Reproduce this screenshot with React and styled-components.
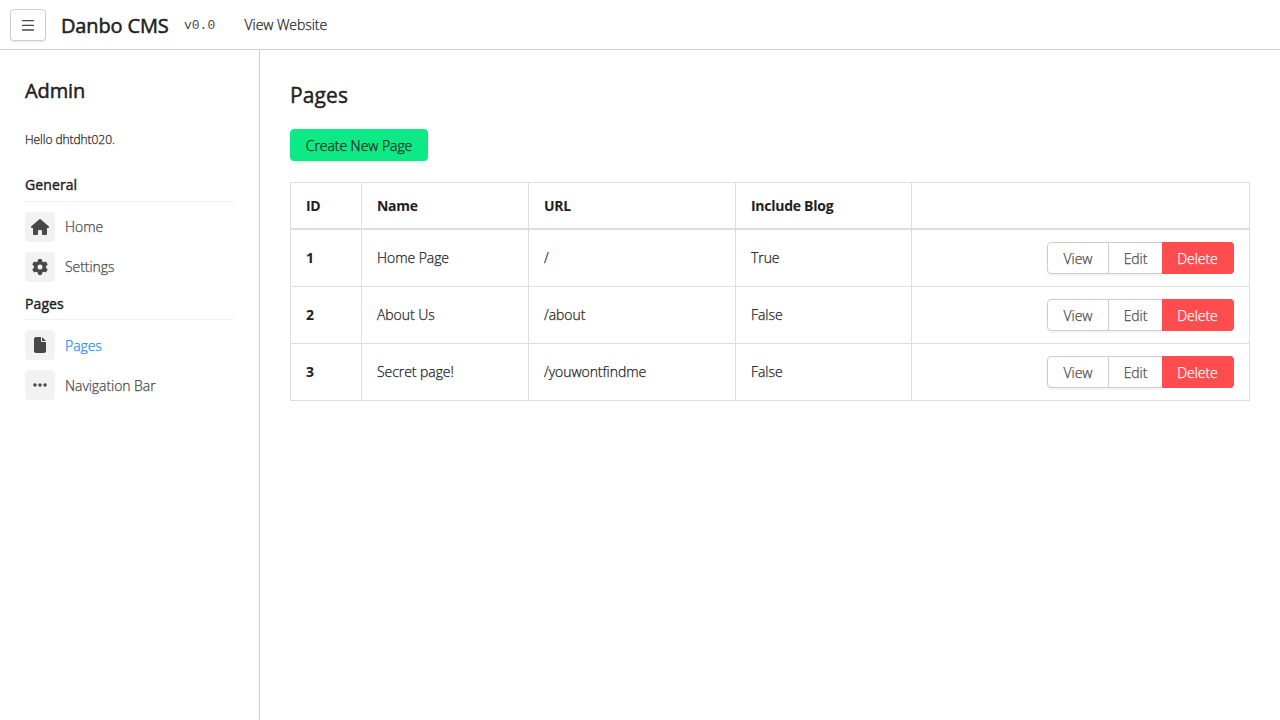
import React from "react";
import styled, { createGlobalStyle } from "styled-components";
import { FaHouse, FaGear, FaFile, FaEllipsis } from "react-icons/fa6";

const Global = createGlobalStyle`
  * { box-sizing: border-box; }
  body {
    margin: 0;
    background: #fff;
    color: #212121;
    font: 300 14px/20px "Segoe UI", "Open Sans", "Noto Sans", sans-serif;
    letter-spacing: -0.06px;
    -webkit-text-stroke: 0.25px currentColor;
  }
  h1, h2, h3, p { margin: 0; }
  a { color: inherit; text-decoration: none; }
`;

const Page = styled.div`
  height: 100vh;
  display: flex;
  flex-direction: column;
  overflow: hidden;
`;

const TopBar = styled.header`
  height: 50px;
  flex: none;
  display: flex;
  align-items: center;
  padding: 0 10px;
  border-bottom: 1px solid #ccc;
`;

const MenuButton = styled.button`
  width: 36px;
  height: 32px;
  margin: 1px 15px 0 0;
  padding: 0;
  display: flex;
  align-items: center;
  justify-content: center;
  background: #fff;
  border: 1px solid #ccc;
  border-radius: 4px;
  box-shadow: 0 2px 0 rgba(0, 0, 0, 0.045);
  color: #484848;
`;

const Brand = styled.h1`
  width: 123px;
  padding-top: 2px;
  font-size: 20px;
  line-height: 28px;
  font-weight: 400;
  letter-spacing: -0.15px;
  -webkit-text-stroke-width: 0.5px;
  white-space: nowrap;
`;

const Version = styled.span`
  width: 60.5px;
  padding-top: 3px;
  font: 13px/20px "Liberation Mono", monospace;
  letter-spacing: 0;
  -webkit-text-stroke-width: 0;
  color: #484848;
`;

const TopLink = styled.a`
  padding-top: 1px;
`;

const Body = styled.div`
  flex: 1;
  display: flex;
  min-height: 0;
`;

const Sidebar = styled.aside`
  width: 260px;
  flex: none;
  padding: 27px 25px 0;
  border-right: 1px solid #ccc;
`;

const SideTitle = styled.h2`
  font-size: 20px;
  line-height: 28px;
  font-weight: 400;
  letter-spacing: -0.1px;
  -webkit-text-stroke-width: 0.5px;
`;

const Greeting = styled.p`
  margin-top: 25px;
  font-size: 12px;
  line-height: 20px;
`;

const SectionTitle = styled.h3`
  height: ${(p) => (p.$first ? 27 : 28)}px;
  margin: ${(p) => (p.$first ? "25px" : "0")} 0 10px;
  padding-top: ${(p) => (p.$first ? 0 : 2)}px;
  font-size: 14px;
  line-height: 20px;
  font-weight: 400;
  letter-spacing: 0.1px;
  -webkit-text-stroke-width: 0.4px;
  border-bottom: 1px solid #f0f0f0;
`;

const NavItem = styled.a`
  display: flex;
  align-items: center;
  gap: 10px;
  height: 30px;
  margin-bottom: 10px;
  color: ${(p) => (p.$active ? "#1a8cff" : "#484848")};
`;

const NavLabel = styled.span`
  padding-top: ${(p) => (p.$low ? 2 : 0)}px;
`;

const NavIcon = styled.span`
  width: 30px;
  height: 30px;
  display: flex;
  align-items: center;
  justify-content: center;
  border-radius: 4px;
  background: #f2f2f2;
  color: #484848;

  svg { width: ${(p) => p.$size}px; height: 16px; stroke: none; }
`;

const Main = styled.main`
  flex: 1;
  padding: 30px;
`;

const Heading = styled.h2`
  font-size: 21px;
  line-height: 31px;
  font-weight: 400;
  letter-spacing: 0.1px;
  -webkit-text-stroke-width: 0.4px;
  margin-bottom: 18px;
`;

const Button = styled.button`
  height: 32px;
  padding: 2px 0 0;
  width: ${(p) => p.$w}px;
  font: inherit;
  letter-spacing: inherit;
  border: 1px solid #ccc;
  border-radius: 4px;
  color: #484848;
  background: #fff;
  box-shadow: 0 2px 0 rgba(0, 0, 0, 0.045);
  ${(p) => p.$kind === "create" && "background: #0de984; border-color: #0de984; color: #212121;"}
  ${(p) => p.$kind === "delete" && "background: #ff4d4f; border-color: #ff4d4f; color: #fff; box-shadow: none;"}
`;

const ButtonGroup = styled.div`
  display: flex;
  justify-content: flex-end;

  ${Button} { border-radius: 0; }
  ${Button} + ${Button} { border-left-width: 0; }
  ${Button}:first-child { border-radius: 4px 0 0 4px; }
  ${Button}:last-child { border-radius: 0 4px 4px 0; }
  ${Button}:nth-child(2) { border-right-width: 0; }
`;

const Table = styled.table`
  width: 960px;
  margin-top: 21px;
  table-layout: fixed;
  border-collapse: separate;
  border-spacing: 0;
  border: solid #dbdfe1;
  border-width: 1px 0 0 1px;
`;

const Col = styled.col`
  width: ${(p) => p.$w}px;
`;

const Cell = styled.td`
  height: 57px;
  padding: 0 15px;
  text-align: left;
  vertical-align: middle;
  font-weight: ${(p) => (p.$bold ? 700 : "inherit")};
  ${(p) => p.$bold && "-webkit-text-stroke-width: 0;"}
  border: solid #dbdfe1;
  border-width: 0 1px 1px 0;
`;

const HeadCell = styled(Cell)`
  height: 47px;
  font-weight: 700;
  letter-spacing: -0.27px;
  -webkit-text-stroke-width: 0;
  border-bottom-width: 2px;
`;

const general = [
  { label: "Home", icon: FaHouse, size: 18 },
  { label: "Settings", icon: FaGear, size: 16 },
];
const pagesNav = [
  { label: "Pages", icon: FaFile, size: 12, active: true },
  { label: "Navigation Bar", icon: FaEllipsis, size: 14 },
];
const rows = [
  { id: 1, name: "Home Page", url: "/", blog: "True" },
  { id: 2, name: "About Us", url: "/about", blog: "False" },
  { id: 3, name: "Secret page!", url: "/youwontfindme", blog: "False" },
];

const Nav = ({ items, low }) =>
  items.map(({ label, icon: Icon, size, active }) => (
    <NavItem key={label} $active={active}>
      <NavIcon $size={size}><Icon /></NavIcon>
      <NavLabel $low={low}>{label}</NavLabel>
    </NavItem>
  ));

const MenuIcon = () => (
  <svg width="12" height="12" viewBox="0 0 12 12" stroke="currentColor" strokeWidth="1.4" strokeLinecap="round">
    <path d="M.6 1.6h10.8M.6 6.4h10.8M.6 11h10.8" />
  </svg>
);

export default function App() {
  return (
    <Page>
      <Global />
      <TopBar>
        <MenuButton aria-label="Menu"><MenuIcon /></MenuButton>
        <Brand>Danbo CMS</Brand>
        <Version>v0.0</Version>
        <TopLink>View Website</TopLink>
      </TopBar>
      <Body>
        <Sidebar>
          <SideTitle>Admin</SideTitle>
          <Greeting>Hello dhtdht020.</Greeting>
          <SectionTitle $first>General</SectionTitle>
          <Nav items={general} />
          <SectionTitle>Pages</SectionTitle>
          <Nav items={pagesNav} low />
        </Sidebar>
        <Main>
          <Heading>Pages</Heading>
          <Button $kind="create" $w={138}>Create New Page</Button>
          <Table>
            <colgroup>
              {[71, 167, 207, 176, 338].map((w) => <Col key={w} $w={w} />)}
            </colgroup>
            <thead>
              <tr>
                {["ID", "Name", "URL", "Include Blog", ""].map((h) => (
                  <HeadCell as="th" key={h}>{h}</HeadCell>
                ))}
              </tr>
            </thead>
            <tbody>
              {rows.map((r) => (
                <tr key={r.id}>
                  <Cell $bold>{r.id}</Cell>
                  <Cell>{r.name}</Cell>
                  <Cell>{r.url}</Cell>
                  <Cell>{r.blog}</Cell>
                  <Cell>
                    <ButtonGroup>
                      <Button $w={62}>View</Button>
                      <Button $w={53}>Edit</Button>
                      <Button $kind="delete" $w={72}>Delete</Button>
                    </ButtonGroup>
                  </Cell>
                </tr>
              ))}
            </tbody>
          </Table>
        </Main>
      </Body>
    </Page>
  );
}
